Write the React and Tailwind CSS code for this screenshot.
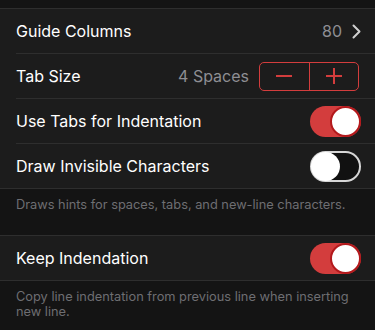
import { useState } from 'react';

const Toggle = ({ on, onChange }) => (
  <button
    onClick={onChange}
    className={
      on
        ? 'relative w-[51px] h-[31px] rounded-full bg-[#d33d3d] shrink-0'
        : 'relative w-[51px] h-[31px] rounded-full bg-[#111111] border-2 border-[#d6d6d6] shrink-0'
    }
  >
    {on ? (
      <span className="absolute right-0 top-0 w-[31px] h-[31px] rounded-full bg-white border-2 border-[#b3191c]" />
    ) : (
      <span className="absolute left-[-1px] top-[-1px] w-[29px] h-[29px] rounded-full bg-white" />
    )}
  </button>
);

const Row = ({ children, last }) => (
  <div className="pl-4 bg-[#1c1c1c]">
    <div
      className={
        last
          ? 'h-[44px] flex items-center pr-[14px]'
          : 'h-[45px] flex items-center pr-[14px] border-b border-[#2e2e2e]'
      }
    >
      {children}
    </div>
  </div>
);

export default function App() {
  const [useTabs, setUseTabs] = useState(true);
  const [invisible, setInvisible] = useState(false);
  const [keepIndent, setKeepIndent] = useState(true);
  const [tabSize, setTabSize] = useState(4);

  return (
    <div
      className="w-[375px] h-[330px] overflow-hidden bg-[#141414] text-white text-[16px]"
      style={{ fontFamily: 'Inter, "Noto Sans", sans-serif' }}
    >
      <div className="h-[9px] border-b border-[#2e2e2e]" />

      <div className="border-b border-[#2e2e2e]">
        <Row>
          <span className="flex-1">Guide Columns</span>
          <span className="text-[#8e8e93]">80</span>
          <svg width="9" height="15" viewBox="0 0 9 15" className="ml-[10px]">
            <path d="M1.5 1.5 L7.5 7.5 L1.5 13.5" fill="none" stroke="#d0d0d0" strokeWidth="2" strokeLinecap="round" strokeLinejoin="round" />
          </svg>
        </Row>
        <Row>
          <span className="flex-1">Tab Size</span>
          <span className="text-[#8e8e93] mr-[10px]">{tabSize} Spaces</span>
          <div className="flex w-[100px] h-[29px] border border-[#d33d3d] rounded-[5px] mr-[2px]">
            <button
              onClick={() => setTabSize(Math.max(1, tabSize - 1))}
              className="flex-1 flex items-center justify-center border-r border-[#d33d3d]"
            >
              <span className="block w-[16px] h-[2px] bg-[#d33d3d]" />
            </button>
            <button
              onClick={() => setTabSize(tabSize + 1)}
              className="flex-1 flex items-center justify-center"
            >
              <svg width="16" height="16" viewBox="0 0 16 16">
                <path d="M8 0 V16 M0 8 H16" stroke="#d33d3d" strokeWidth="2" />
              </svg>
            </button>
          </div>
        </Row>
        <Row>
          <span className="flex-1">Use Tabs for Indentation</span>
          <Toggle on={useTabs} onChange={() => setUseTabs(!useTabs)} />
        </Row>
        <Row last>
          <span className="flex-1">Draw Invisible Characters</span>
          <Toggle on={invisible} onChange={() => setInvisible(!invisible)} />
        </Row>
      </div>
      <p className="px-4 pt-[8px] pb-[22px] text-[12.8px] leading-[16px] text-[#6e6e72]">
        Draws hints for spaces, tabs, and new-line characters.
      </p>

      <div className="border-t border-b border-[#2e2e2e]">
        <Row last>
          <span className="flex-1">Keep Indendation</span>
          <Toggle on={keepIndent} onChange={() => setKeepIndent(!keepIndent)} />
        </Row>
      </div>
      <p className="px-4 pt-[8px] text-[12.8px] leading-[15px] text-[#6e6e72]">
        Copy line indentation from previous line when inserting new line.
      </p>
    </div>
  );
}
